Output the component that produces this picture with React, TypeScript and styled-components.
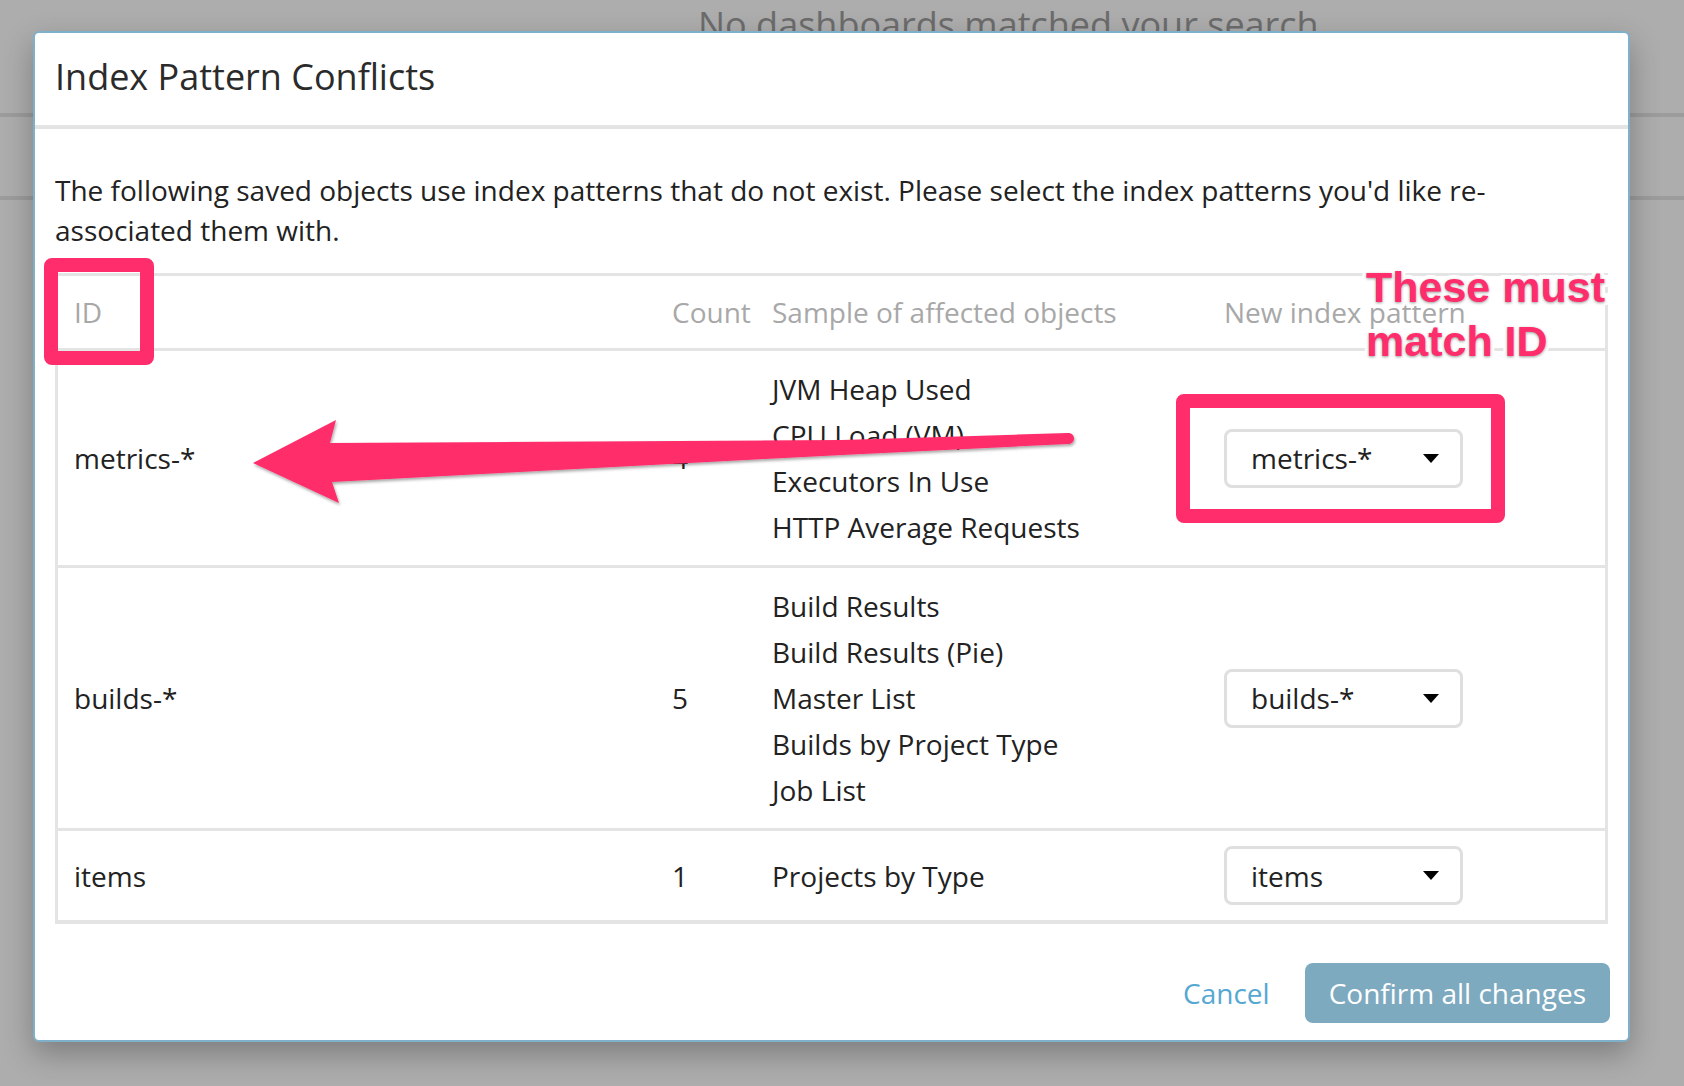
import React from 'react';
import styled, {createGlobalStyle} from 'styled-components';

const GlobalStyle = createGlobalStyle`
  html, body {
    margin: 0;
    padding: 0;
  }
  body {
    background: #adadad;
    font-family: 'Open Sans', 'DejaVu Sans', sans-serif;
    overflow: hidden;
  }
`

const PINK = '#ff2d6b'

const Page = styled.div`
  position: relative;
  width: 1684px;
  height: 1086px;
  overflow: hidden;
  background: #adadad;
`

const BgTop = styled.div`
  height: 116px;
  padding-left: 698px;
  border-bottom: 4px solid #9c9c9c;
  box-sizing: border-box;
  &>span{
    display: block;
    margin-top: 1px;
    font-size: 36px;
    line-height: 48px;
    color: #6c6c6c;
  }
`

const BgBar = styled.div`
  height: 79px;
  border-bottom: 4px solid #9c9c9c;
`

const Modal = styled.div`
  position: absolute;
  left: 33px;
  top: 31px;
  width: 1597px;
  height: 1011px;
  box-sizing: border-box;
  background: #ffffff;
  border: 2px solid #7eb0c9;
  border-radius: 6px;
  box-shadow: 0 12px 30px rgba(0, 0, 0, 0.28);
  display: flex;
  flex-direction: column;
`

const Header = styled.div`
  padding: 20px 20px 24px;
  border-bottom: 4px solid #e4e4e4;
  font-size: 36px;
  line-height: 48px;
  color: #2b2b2b;
`

const Body = styled.div`
  padding: 41px 20px 0;
`

const Description = styled.p`
  margin: 0 0 23px;
  font-size: 28px;
  line-height: 40px;
  color: #222;
`

const Table = styled.div`
  border: 3px solid #e4e4e4;
  border-bottom-width: 4px;
  display: grid;
  grid-template-columns: 598px 100px 452px 1fr;
`

const Row = styled.div<{ $head?: boolean, $last?: boolean }>`
  display: contents;
  &>div{
    padding: ${p => p.$head ? '16px' : '15px'} 16px;
    min-height: ${p => p.$head ? '40px' : '59px'};
    border-bottom: ${p => p.$last ? 'none' : '3px solid #e4e4e4'};
    display: flex;
    align-items: center;
    font-size: 28px;
    line-height: 40px;
    color: ${p => p.$head ? '#a8a8a8' : '#222'};
  }
`

const Samples = styled.ul`
  list-style: none;
  margin: 0;
  padding: 0;
  &>li{
    line-height: 46px;
  }
`

const Select = styled.div`
  width: 239px;
  height: 59px;
  box-sizing: border-box;
  border: 3px solid #dfdfdf;
  border-radius: 8px;
  padding: 0 21px 0 24px;
  display: flex;
  align-items: center;
  justify-content: space-between;
  color: #222;
  &>i{
    width: 0;
    height: 0;
    border-left: 8px solid transparent;
    border-right: 8px solid transparent;
    border-top: 9px solid #000;
  }
`

const Footer = styled.div`
  margin-top: auto;
  padding: 0 18px 17px;
  display: flex;
  justify-content: flex-end;
  align-items: center;
  gap: 35px;
`

const Cancel = styled.span`
  font-size: 28px;
  color: #56a8d2;
`

const Confirm = styled.div`
  background: #7eaac0;
  color: #fff;
  font-size: 28px;
  line-height: 60px;
  padding: 0 24px;
  border-radius: 8px;
`

const Overlay = styled.svg`
  position: absolute;
  left: 0;
  top: 0;
  pointer-events: none;
`

const Box = styled.div<{ $x: number, $y: number, $w: number, $h: number }>`
  position: absolute;
  left: ${p => p.$x}px;
  top: ${p => p.$y}px;
  width: ${p => p.$w}px;
  height: ${p => p.$h}px;
  box-sizing: border-box;
  border: 14px solid ${PINK};
  border-radius: 8px;
  pointer-events: none;
`

const Note = styled.div`
  position: absolute;
  left: 1366px;
  top: 260px;
  font-family: 'Liberation Sans', Arial, sans-serif;
  font-weight: bold;
  font-size: 43px;
  line-height: 54px;
  color: ${PINK};
  -webkit-text-stroke: 8px #fff;
  paint-order: stroke fill;
  text-shadow: 0 1px 3px rgba(0, 0, 0, 0.4);
  white-space: nowrap;
`

const rows = [
    {id: 'metrics-*', count: 4, samples: ['JVM Heap Used', 'CPU Load (VM)', 'Executors In Use', 'HTTP Average Requests']},
    {id: 'builds-*', count: 5, samples: ['Build Results', 'Build Results (Pie)', 'Master List', 'Builds by Project Type', 'Job List']},
    {id: 'items', count: 1, samples: ['Projects by Type']},
]

function App() {
    return (
        <>
            <GlobalStyle/>
            <Page>
                <BgTop><span>No dashboards matched your search</span></BgTop>
                <BgBar/>
                <Modal>
                    <Header>Index Pattern Conflicts</Header>
                    <Body>
                        <Description>
                            The following saved objects use index patterns that do not exist. Please select the index patterns you'd like re-<br/>associated them with.
                        </Description>
                        <Table>
                            <Row $head>
                                <div>ID</div>
                                <div>Count</div>
                                <div>Sample of affected objects</div>
                                <div>New index pattern</div>
                            </Row>
                            {rows.map((r, i) => (
                                <Row key={r.id} $last={i === rows.length - 1}>
                                    <div>{r.id}</div>
                                    <div>{r.count}</div>
                                    <div>
                                        <Samples>
                                            {r.samples.map(s => <li key={s}>{s}</li>)}
                                        </Samples>
                                    </div>
                                    <div>
                                        <Select><span>{r.id}</span><i/></Select>
                                    </div>
                                </Row>
                            ))}
                        </Table>
                    </Body>
                    <Footer>
                        <Cancel>Cancel</Cancel>
                        <Confirm>Confirm all changes</Confirm>
                    </Footer>
                </Modal>

                {/* annotations drawn over the dialog */}
                <Box $x={44} $y={258} $w={110} $h={107}/>
                <Box $x={1176} $y={394} $w={329} $h={129}/>
                <Overlay width={1684} height={1086} viewBox="0 0 1684 1086">
                    <defs>
                        <filter id="arrowShadow" x="-5%" y="-20%" width="110%" height="160%">
                            <feDropShadow dx="1" dy="2" stdDeviation="1.5" floodColor="#000" floodOpacity="0.35"/>
                        </filter>
                    </defs>
                    <path
                        d="M253 463 L336 420 L330 443 L842 440 L1068 433 C1076 433 1076 444 1068 444 L842 455 L332 482 L339 503 Z"
                        fill={PINK}
                        filter="url(#arrowShadow)"
                    />
                </Overlay>
                <Note>These must<br/>match ID</Note>
            </Page>
        </>
    );
}

export default App;
